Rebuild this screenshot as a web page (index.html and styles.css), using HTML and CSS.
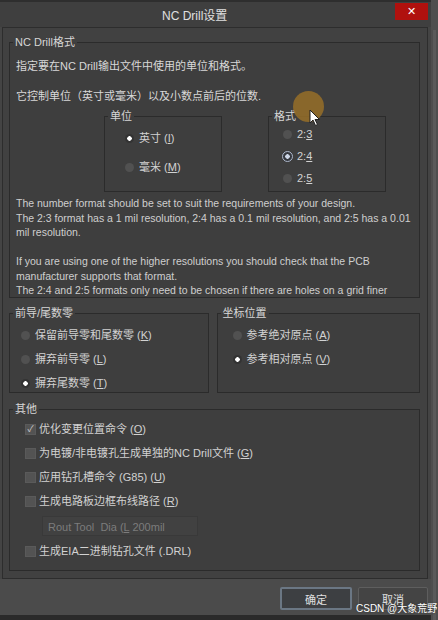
FILE: index.html
```html
<!DOCTYPE html>
<html lang="zh-CN">
<head>
    <meta charset="UTF-8">
    <meta name="viewport" content="width=device-width, initial-scale=1.0">
    <title>NC Drill设置</title>
    <link rel="stylesheet" href="styles.css">
</head>
<body>
    <div class="dialog">
        <div class="titlebar">
            <span class="title">NC Drill设置</span>
            <button class="close">&#x2715;</button>
        </div>

        <div class="panel">
            <!-- NC Drill format -->
            <fieldset class="group main-group">
                <legend>NC Drill格式</legend>
                <p class="intro">指定要在NC Drill输出文件中使用的单位和格式。</p>
                <p class="intro second">它控制单位（英寸或毫米）以及小数点前后的位数.</p>

                <div class="format-row">
                    <fieldset class="group small-group units">
                        <legend>单位</legend>
                        <label class="radio"><span class="dot on"></span>英寸 (<u>I</u>)</label>
                        <label class="radio"><span class="dot"></span>毫米 (<u>M</u>)</label>
                    </fieldset>
                    <fieldset class="group small-group formats">
                        <legend>格式</legend>
                        <label class="radio"><span class="dot"></span>2:<u>3</u></label>
                        <label class="radio"><span class="dot focus"></span>2:<u>4</u></label>
                        <label class="radio"><span class="dot"></span>2:<u>5</u></label>
                    </fieldset>
                </div>

                <div class="notes">
                    <p>The number format should be set to suit the requirements of your design.<br>
                    The 2:3 format has a 1 mil resolution, 2:4 has a 0.1 mil resolution, and 2:5 has a 0.01<br>
                    mil resolution.</p>
                    <p>If you are using one of the higher resolutions you should check that the PCB<br>
                    manufacturer supports that format.<br>
                    The 2:4 and 2:5 formats only need to be chosen if there are holes on a grid finer</p>
                </div>
            </fieldset>

            <div class="pair">
                <fieldset class="group half">
                    <legend>前导/尾数零</legend>
                    <label class="radio"><span class="dot"></span>保留前导零和尾数零 (<u>K</u>)</label>
                    <label class="radio"><span class="dot"></span>摒弃前导零 (<u>L</u>)</label>
                    <label class="radio"><span class="dot on"></span>摒弃尾数零 (<u>T</u>)</label>
                </fieldset>
                <fieldset class="group half">
                    <legend>坐标位置</legend>
                    <label class="radio"><span class="dot"></span>参考绝对原点 (<u>A</u>)</label>
                    <label class="radio"><span class="dot on"></span>参考相对原点 (<u>V</u>)</label>
                </fieldset>
            </div>

            <fieldset class="group other">
                <legend>其他</legend>
                <label class="check"><span class="box on">&#x2713;</span>优化变更位置命令 (<u>O</u>)</label>
                <label class="check"><span class="box"></span>为电镀/非电镀孔生成单独的NC Drill文件 (<u>G</u>)</label>
                <label class="check"><span class="box"></span>应用钻孔槽命令 (G85) (<u>U</u>)</label>
                <label class="check"><span class="box"></span>生成电路板边框布线路径 (<u>R</u>)</label>
                <div class="rout-tool">Rout Tool&nbsp; Dia (<u>L</u> 200mil</div>
                <label class="check"><span class="box"></span>生成EIA二进制钻孔文件 (.DRL)</label>
            </fieldset>
        </div>

        <div class="footer">
            <button class="btn primary">确定</button>
            <button class="btn">取消</button>
        </div>
    </div>

    <div class="side-strip"></div>
    <div class="cursor-spot"></div>
    <svg class="cursor" width="12" height="18" viewBox="0 0 12 18">
        <path d="M1 1 L1 14 L4 11 L6.5 16.5 L8.5 15.5 L6 10.5 L10.5 10.5 Z" fill="#ffffff" stroke="#222" stroke-width="1"/>
    </svg>
    <span class="watermark">CSDN @大象荒野</span>
</body>
</html>
```

FILE: styles.css
```css
/* Reset and basic layout */
* {
    margin: 0;
    padding: 0;
    box-sizing: border-box;
}

body {
    font-family: "Liberation Sans", "Noto Sans CJK SC", sans-serif;
    font-size: 11px;
    color: #d2d2d2;
    background-color: #4e4e4e;
    width: 438px;
    height: 620px;
    overflow: hidden;
    display: flex;
}

u {
    text-decoration: underline;
}

.dialog {
    width: 431px;
    height: 620px;
    flex-shrink: 0;
    background-color: #444444;
    border-top: 2px solid #2e2e2e;
    border-bottom: 5px solid #2a2a2a;
    display: flex;
    flex-direction: column;
}

.side-strip {
    width: 3px;
    margin: 30px 0 0 2px;
    background-color: #5a5a5a;
}

/* Title bar */
.titlebar {
    height: 25px;
    display: flex;
    align-items: flex-start;
    background-color: #3f3f3f;
}

.title {
    padding: 4px 0 0 162px;
    font-size: 12px;
    color: #e0e0e0;
}

.close {
    margin-left: auto;
    margin-right: 3px;
    margin-top: 1px;
    width: 33px;
    height: 17px;
    border: none;
    background-color: #b0110e;
    color: #ffffff;
    font-size: 11px;
    font-weight: bold;
    font-family: "DejaVu Sans", sans-serif;
}

/* Main panel */
.panel {
    margin: 0 3px 0 2px;
    height: 552px;
    border: 1px solid #2d2d2d;
    background-color: #414141;
    padding: 7px 7px 0 6px;
}

fieldset.group {
    border: 1px solid #2b2b2b;
    background-color: #3e3e3e;
}

fieldset.group legend {
    padding: 0 2px;
    line-height: 14px;
    color: #d6d6d6;
}

.main-group {
    height: 263px;
    padding: 10px 0 0 6px;
    overflow: hidden;
}

.main-group > legend {
    margin-left: -3px;
}

.intro {
    line-height: 15px;
    color: #d8d8d8;
}

.intro.second {
    margin-top: 15px;
}

.format-row {
    display: flex;
    gap: 46px;
    margin: 5px 0 0 88px;
}

.small-group {
    width: 118px;
    height: 83px;
    display: flex;
    flex-direction: column;
}

.units {
    padding: 8px 0 0 20px;
    gap: 14px;
}

.units > legend {
    margin-left: -17px;
}

.formats {
    padding: 4px 0 0 14px;
    gap: 7px;
}

.formats > legend {
    margin-left: -11px;
}

.radio {
    display: flex;
    align-items: center;
    line-height: 15px;
    white-space: nowrap;
}

.dot {
    width: 9px;
    height: 9px;
    border-radius: 50%;
    background-color: #515151;
    margin-right: 5px;
    flex-shrink: 0;
}

.dot.on {
    background-color: #333333;
    background-image: radial-gradient(circle, #ffffff 0 2px, transparent 2.5px);
}

.dot.focus {
    width: 11px;
    height: 11px;
    margin-left: -1px;
    margin-right: 4px;
    border: 1.5px solid #aeb8cc;
    background-color: #36393f;
    background-image: radial-gradient(circle, #cdd6e6 0 2px, transparent 2.5px);
}

.notes {
    margin-top: 4px;
    font-size: 10.5px;
    line-height: 14.5px;
    color: #cfcfcf;
    white-space: nowrap;
}

.notes p + p {
    margin-top: 14.5px;
}

/* Leading zeros / coordinates */
.pair {
    display: flex;
    gap: 8px;
    margin-top: 8px;
}

.half {
    flex: 1;
    height: 87px;
    padding: 8px 0 0 11px;
    display: flex;
    flex-direction: column;
    gap: 9px;
}

.half > legend {
    margin-left: -8px;
}

.half + .half {
    padding-left: 15px;
}

.half + .half > legend {
    margin-left: -12px;
}

/* Other options */
.other {
    margin-top: 9px;
    height: 169px;
    padding: 6px 0 0 15px;
    display: flex;
    flex-direction: column;
    gap: 9px;
}

.other > legend {
    margin-left: -12px;
}

.check {
    display: flex;
    align-items: center;
    line-height: 15px;
    white-space: nowrap;
}

.box {
    width: 11px;
    height: 11px;
    margin-right: 3px;
    background-color: #535353;
    border: 1px solid #5a5a5a;
    color: #c8c8c8;
    font-size: 9px;
    line-height: 9px;
    text-align: center;
    flex-shrink: 0;
}

.rout-tool {
    width: 156px;
    height: 20px;
    margin: -2px 0 -1px 17px;
    padding-left: 5px;
    line-height: 20px;
    color: #7c7c7c;
    background-color: #414141;
    border: 1px solid #393939;
}

/* Footer buttons */
.footer {
    flex: 1;
    display: flex;
    justify-content: flex-end;
    align-items: flex-start;
    gap: 6px;
    padding: 8px 3px 0 0;
    background-color: #4b4b4b;
}

.btn {
    width: 70px;
    height: 23px;
    font-family: "Liberation Sans", "Noto Sans CJK SC", sans-serif;
    font-size: 11px;
    color: #e0e0e0;
    background-color: #444444;
    border: 1px solid #5e5e5e;
    border-radius: 2px;
}

.btn.primary {
    width: 72px;
    background-color: #3d3f42;
    border: 2px solid #6b7784;
}

/* Screen-recording overlays */
.cursor-spot {
    position: absolute;
    left: 293px;
    top: 91px;
    width: 31px;
    height: 31px;
    border-radius: 50%;
    background-color: rgba(150, 110, 40, 0.85);
}

.cursor {
    position: absolute;
    left: 309px;
    top: 109px;
}

.watermark {
    position: absolute;
    left: 356px;
    top: 600px;
    font-family: "Liberation Sans", "Noto Sans CJK SC", sans-serif;
    font-size: 10px;
    white-space: nowrap;
    color: #ffffff;
    text-shadow: 0 0 2px #333;
}
```
